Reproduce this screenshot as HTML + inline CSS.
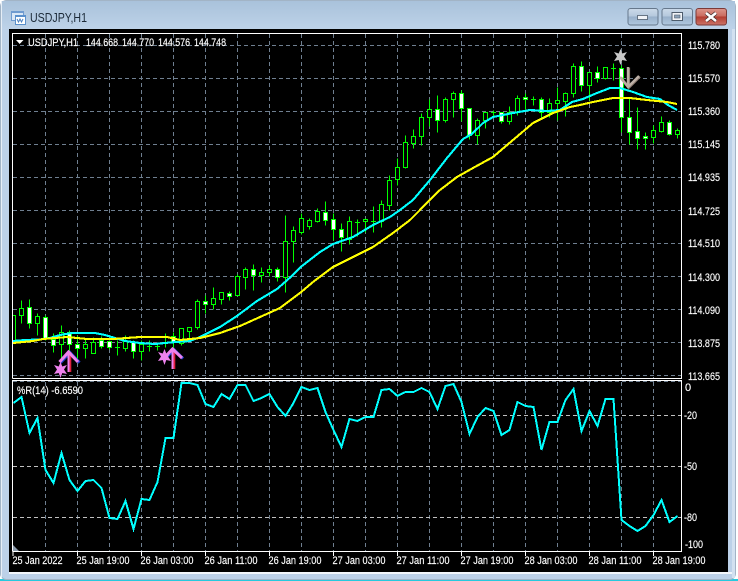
<!DOCTYPE html>
<html><head><meta charset="utf-8"><title>USDJPY,H1</title>
<style>
html,body{margin:0;padding:0;background:#fff}
body{width:738px;height:581px;overflow:hidden;position:relative}
svg{position:absolute;left:0;top:0;display:block}
text{font-family:"Liberation Sans",sans-serif;font-size:11px;fill:#fff;stroke:#fff;stroke-width:.15}
</style></head><body>
<svg width="738" height="581" viewBox="0 0 738 581" xmlns="http://www.w3.org/2000/svg">
<defs>
<linearGradient id="tb" x1="0" y1="0" x2="0" y2="1"><stop offset="0" stop-color="#a9c2db"/><stop offset="1" stop-color="#bdd2e8"/></linearGradient>
<linearGradient id="bt" x1="0" y1="0" x2="0" y2="1"><stop offset="0" stop-color="#ccdaea"/><stop offset=".48" stop-color="#b4c8dc"/><stop offset=".5" stop-color="#98b0ca"/><stop offset="1" stop-color="#b0c8e0"/></linearGradient>
<linearGradient id="cl" x1="0" y1="0" x2="0" y2="1"><stop offset="0" stop-color="#dc968c"/><stop offset=".48" stop-color="#c96a5e"/><stop offset=".5" stop-color="#b23c30"/><stop offset="1" stop-color="#cc7468"/></linearGradient>
</defs>
<rect width="738" height="581" fill="#fff"/>
<rect x="0" y="579" width="738" height="2" fill="#27c9de"/>
<rect x="0.5" y="0.5" width="735" height="579" rx="6" fill="#bcd1e8" stroke="#a2b4c6"/>
<rect x="1" y="1" width="734" height="28" fill="url(#tb)"/>
<rect x="1" y="1" width="1" height="577" fill="#e6eef6"/>
<rect x="732" y="29" width="3" height="549" fill="#d3e1f0"/>
<!-- icon -->
<rect x="11.5" y="11.5" width="12" height="9" fill="#dbe8f6" stroke="#6f9bd0"/>
<rect x="11" y="11" width="13" height="2" fill="#6f9bd0"/>
<rect x="15.5" y="15.5" width="10" height="9" fill="#fff" stroke="#5a90cc"/>
<rect x="15" y="15" width="11" height="2" fill="#5a90cc"/>
<path d="M17 19l1.5 3 1.5-3 1.5 3 1.5-3" fill="none" stroke="#4a80c0"/>
<text x="30" y="22" textLength="57" lengthAdjust="spacingAndGlyphs" style="font-size:13px;fill:#1c2a38;stroke:none">USDJPY,H1</text>
<!-- buttons -->
<rect x="628" y="8.5" width="30" height="16.5" rx="2.5" fill="url(#bt)" stroke="#66788c"/>
<rect x="637.5" y="15.5" width="10" height="4" fill="#f1f4f8" stroke="#4e5c6c" stroke-width=".8"/>
<rect x="662" y="8.5" width="30.5" height="16.5" rx="2.5" fill="url(#bt)" stroke="#66788c"/>
<rect x="672" y="12.5" width="10.500" height="8" fill="#f1f4f8" stroke="#4e5c6c"/>
<rect x="674.5" y="15" width="5.5" height="3" fill="#8da3bb" stroke="#4e5c6c" stroke-width=".6"/>
<rect x="696" y="8.5" width="30.5" height="16.5" rx="2.5" fill="url(#cl)" stroke="#7b3a38"/>
<path d="M706 13l10 8M716 13l-10 8" stroke="#3c2a2a" stroke-width="4"/>
<path d="M706 13l10 8M716 13l-10 8" stroke="#fff" stroke-width="2.6"/>
<!-- client -->
<rect x="9" y="29" width="719" height="543" fill="#000"/>
<rect x="9" y="572" width="723" height="2" fill="#f2f6fb"/>
<!-- grid -->
<g fill="none" stroke="#6f7f90" stroke-dasharray="4 3" shape-rendering="crispEdges">
<path d="M45.5 34V378M77.5 34V378M109.5 34V378M141.5 34V378M173.5 34V378M205.5 34V378M237.5 34V378M269.5 34V378M301.5 34V378M333.5 34V378M365.5 34V378M397.5 34V378M429.5 34V378M461.5 34V378M493.5 34V378M525.5 34V378M557.5 34V378M589.5 34V378M621.5 34V378M653.5 34V378"/>
<path d="M13 45.5H681M13 78.5H681M13 111.5H681M13 144.5H681M13 177.5H681M13 210.5H681M13 243.5H681M13 276.5H681M13 309.5H681M13 342.5H681M13 375.5H681"/>
<path d="M45.5 382V551M77.5 382V551M109.5 382V551M141.5 382V551M173.5 382V551M205.5 382V551M237.5 382V551M269.5 382V551M301.5 382V551M333.5 382V551M365.5 382V551M397.5 382V551M429.5 382V551M461.5 382V551M493.5 382V551M525.5 382V551M557.5 382V551M589.5 382V551M621.5 382V551M653.5 382V551"/>
<path d="M13 381.5H681"/>
<path stroke="#c0c0c0" d="M13 415.5H681M13 466.5H681M13 517.5H681"/>
</g>
<!-- candle wicks -->
<g transform="translate(0 .5)" shape-rendering="crispEdges">
<path fill="none" stroke="#0f0" d="M21.5 300V323M29.5 299V328M37.5 313V335M45.5 315V340M53.5 333V352M61.5 325V360M69.5 330V355M77.5 335V360M85.5 338V358M93.5 337V353M101.5 336V348M109.5 340V349M117.5 340V355M125.5 335V351M133.5 340V358M141.5 340V360M149.5 340V351M157.5 342V350M165.5 333V347M173.5 332V351M181.5 328V345M189.5 327V338M197.5 299V329M205.5 295V313M213.5 287V309M221.5 292V304M229.5 291V300M237.5 274V296M245.5 267V289M253.5 264V290M261.5 267V282M269.5 265V276M277.5 267V281M285.5 215V292M293.5 226V262M301.5 213V234M309.5 218V229M317.5 208V222M325.5 201V225M333.5 213V240M341.5 223V251M349.5 216V244M357.5 219V236M365.5 218V232M373.5 206V232M381.5 200V227M389.5 175V210M397.5 158V185M405.5 135V168M413.5 129V148M421.5 113V145M429.5 99V126M437.5 95V132M445.5 97V122M453.5 91V117M461.5 90V121M469.5 108V139M477.5 118V144M485.5 112V128M493.5 110V116M501.5 112V123M509.5 106V124M517.5 95V115M525.5 93V109M533.5 96V105M541.5 97V117M549.5 98V117M557.5 87V120M565.5 92V116M573.5 63V97M581.5 61V91M589.5 72V100M597.5 66V82M605.5 67V79M613.5 63V80M621.5 65V132M629.5 98V144M637.5 107V149M645.5 132V149M653.5 125V143M661.5 116V132M669.5 120V135M677.5 128V138"/>
<path fill="none" stroke="#0f0" d="M12 315H15.5V340H12M115 347H120M147 346H152M155 346H160M355 222H360M491 112H496M531 99H536M611 68H616M371 221H376"/>
<!-- black bodies -->
<g fill="#000" stroke="#0f0">
<rect x="19.5" y="308" width="4" height="7"/><rect x="35.5" y="316" width="4" height="7"/><rect x="59.5" y="332" width="4" height="12"/><rect x="83.5" y="344" width="4" height="4"/><rect x="91.5" y="342" width="4" height="11"/><rect x="123.5" y="341" width="4" height="7"/><rect x="139.5" y="344" width="4" height="7"/><rect x="179.5" y="328" width="4" height="15"/><rect x="187.5" y="327" width="4" height="4"/><rect x="195.5" y="301" width="4" height="26"/><rect x="211.5" y="298" width="4" height="6"/><rect x="219.5" y="292" width="4" height="7"/><rect x="235.5" y="276" width="4" height="19"/><rect x="243.5" y="269" width="4" height="8"/><rect x="259.5" y="272" width="4" height="3"/><rect x="267.5" y="269" width="4" height="3"/><rect x="283.5" y="241" width="4" height="36"/><rect x="291.5" y="230" width="4" height="11"/><rect x="299.5" y="218" width="4" height="14"/><rect x="307.5" y="220" width="4" height="6"/><rect x="315.5" y="211" width="4" height="10"/><rect x="347.5" y="221" width="4" height="18"/><rect x="363.5" y="219" width="4" height="2"/><rect x="379.5" y="204" width="4" height="17"/><rect x="387.5" y="180" width="4" height="25"/><rect x="395.5" y="167" width="4" height="12"/><rect x="403.5" y="142" width="4" height="25"/><rect x="411.5" y="136" width="4" height="7"/><rect x="419.5" y="117" width="4" height="19"/><rect x="427.5" y="109" width="4" height="8"/><rect x="443.5" y="99" width="4" height="21"/><rect x="451.5" y="93" width="4" height="6"/><rect x="475.5" y="120" width="4" height="15"/><rect x="483.5" y="112" width="4" height="8"/><rect x="507.5" y="112" width="4" height="9"/><rect x="515.5" y="98" width="4" height="14"/><rect x="547.5" y="103" width="4" height="9"/><rect x="555.5" y="100" width="4" height="3"/><rect x="563.5" y="93" width="4" height="8"/><rect x="571.5" y="66" width="4" height="27"/><rect x="587.5" y="72" width="4" height="13"/><rect x="603.5" y="67" width="4" height="11"/><rect x="651.5" y="130" width="4" height="7"/><rect x="659.5" y="122" width="4" height="9"/><rect x="675.5" y="130" width="4" height="4"/>
</g>
<!-- white bodies -->
<g fill="#fff" stroke="#0f0">
<rect x="27.5" y="307" width="4" height="16"/><rect x="43.5" y="317" width="4" height="21"/><rect x="51.5" y="339" width="4" height="6"/><rect x="67.5" y="332" width="4" height="12"/><rect x="75.5" y="344" width="4" height="4"/><rect x="99.5" y="340" width="4" height="6"/><rect x="107.5" y="341" width="4" height="6"/><rect x="131.5" y="342" width="4" height="9"/><rect x="171.5" y="336" width="4" height="6"/><rect x="203.5" y="301" width="4" height="3"/><rect x="227.5" y="293" width="4" height="3"/><rect x="251.5" y="269" width="4" height="6"/><rect x="275.5" y="269" width="4" height="8"/><rect x="323.5" y="212" width="4" height="8"/><rect x="331.5" y="219" width="4" height="10"/><rect x="339.5" y="229" width="4" height="8"/><rect x="435.5" y="109" width="4" height="11"/><rect x="459.5" y="93" width="4" height="15"/><rect x="467.5" y="108" width="4" height="27"/><rect x="499.5" y="112" width="4" height="9"/><rect x="523.5" y="97" width="4" height="2"/><rect x="539.5" y="99" width="4" height="13"/><rect x="579.5" y="66" width="4" height="19"/><rect x="595.5" y="72" width="4" height="6"/><rect x="619.5" y="68" width="4" height="49"/><rect x="627.5" y="117" width="4" height="15"/><rect x="635.5" y="131" width="4" height="7"/><rect x="643.5" y="136" width="4" height="2"/><rect x="667.5" y="122" width="4" height="12"/>
</g>
</g>
<!-- moving averages -->
<polyline fill="none" stroke="#0ff" stroke-width="2.1" shape-rendering="crispEdges" points="13,341 25,340 40,339.5 50,338 60,335 72,333 95,333 105,335 115,338 125,341 140,343 155,344 170,342.5 190,341 200,337 220,327 237,316 257,301 277,289 293,275 302,266 320,252 333,244 353,237 373,225 390,217 400,210 413,200 430,180 447,158 463,139 472,134 483,123 493,117 513,113 530,110 547,111 560,110 572,102 583,99 597,93 610,88 620,88 633,92 647,97 660,99 668,105 677,110"/>
<polyline fill="none" stroke="#ff0" stroke-width="2.1" shape-rendering="crispEdges" points="13,343 33,341 43,339 67,337 87,339 113,339 140,337 167,337 180,340 200,338 220,333 240,326 260,317 280,308 300,293 313,282 333,267 353,257 373,247 393,233 410,220 420,210 440,190 457,177 473,168 493,157 513,140 533,123 553,113 570,107 580,105 593,102 613,98 630,98 647,100 667,102 677,104"/>
<!-- arrows and stars -->
<g fill="none" stroke-width="3">
<path stroke="#2040d0" transform="translate(1 .6)" d="M59.5 362L69 352L78.5 362"/>
<path stroke="#e02040" stroke-width="2.6" transform="translate(1 0)" d="M69 372V352"/>
<path stroke="#ee82ee" d="M59.5 362L68.5 352L78 362"/>
<path stroke="#ee82ee" stroke-width="2" d="M68.5 372V352"/>
<path stroke="#2040d0" transform="translate(1 .6)" d="M164 358L173 349L182 358"/>
<path stroke="#e02040" stroke-width="2.6" transform="translate(1 0)" d="M173 369V349"/>
<path stroke="#ee82ee" d="M164 358L172.5 349L182 358"/>
<path stroke="#ee82ee" stroke-width="2" d="M172.5 369V349"/>
<path stroke="#8c7a70" stroke-width="2.6" transform="translate(.8 .6)" d="M628 67V87M620 77L628 87L639 76"/>
<path stroke="#bdb0a6" stroke-width="2.4" d="M628 67V87M620 77L628 87L639 76"/>
</g>
<polygon fill="#ee82ee" points="60.5,362 62.3,366.5 67,365 64,369.5 67,374 62.3,373 60.5,378 58.7,373 54,374 57,369.5 54,365 58.7,366.5"/>
<polygon fill="#ee82ee" points="164.5,349 166.3,353.5 171,352 168,356.5 171,361 166.3,360 164.5,365 162.7,360 158,361 161,356.5 158,352 162.7,353.5"/>
<polygon fill="#c8c8c8" points="620.5,49 622.3,53.5 627,52 624,56.5 627,61 622.3,60 620.5,65 618.7,60 614,61 617,56.5 614,52 618.7,53.5"/>
<!-- Williams %R -->
<polyline fill="none" stroke="#0ff" stroke-width="2" shape-rendering="crispEdges" points="13.5,403 21.5,397 29.5,433 37.5,418 45.5,470 53.5,483 61.5,453 69.5,480 77.5,491 85.5,481 93.5,480 101.5,488 109.5,518 117.5,519 125.5,501 133.5,529 141.5,499 149.5,500 157.5,482 165.5,438 173.5,438 181.5,383 189.5,383 197.5,385 205.5,404 213.5,407 221.5,394 229.5,399 237.5,385 245.5,385 253.5,401 261.5,398 269.5,394 277.5,407 285.5,416 293.5,403 301.5,387 309.5,390 317.5,388 325.5,412 333.5,430 341.5,447 349.5,419 357.5,421 365.5,417 373.5,417 381.5,390 389.5,389 397.5,396 405.5,392 413.5,392 421.5,388 429.5,392 437.5,409 445.5,386 453.5,384 461.5,402 469.5,434 477.5,417 485.5,408 493.5,411 501.5,435 509.5,430 517.5,402 525.5,406 533.5,407 541.5,450 549.5,422 557.5,422 565.5,400 573.5,389 581.5,431 589.5,411 597.5,426 605.5,399 613.5,399 621.5,520 629.5,526 637.5,531 645.5,526 653.5,515 661.5,500 669.5,522 677.5,516"/>
<!-- borders -->
<g fill="none" stroke="#fff" shape-rendering="crispEdges">
<path d="M12.5 378.5V33.5H681.5V378.5H12.5"/>
<path d="M12.5 551.5V380.5H681.5V551.5H12.5"/>
<path d="M77.5 551V556M141.5 551V556M205.5 551V556M269.5 551V556M333.5 551V556M397.5 551V556M461.5 551V556M525.5 551V556M589.5 551V556M653.5 551V556M13 551V556"/>
</g>
<polygon fill="#8b9aaa" points="13,545 13,551 19,551"/>
<!-- legends -->
<polygon fill="#fff" stroke="none" points="16,40 23.5,40 19.7,44"/>
<text x="28" y="46" textLength="50" lengthAdjust="spacingAndGlyphs">USDJPY,H1</text>
<text x="86" y="46" textLength="32" lengthAdjust="spacingAndGlyphs">144.668</text>
<text x="122" y="46" textLength="32" lengthAdjust="spacingAndGlyphs">144.770</text>
<text x="158" y="46" textLength="32" lengthAdjust="spacingAndGlyphs">144.576</text>
<text x="194" y="46" textLength="32" lengthAdjust="spacingAndGlyphs">144.748</text>
<text x="17" y="394" textLength="66" lengthAdjust="spacingAndGlyphs">%R(14) -6.6590</text>
<!-- right axis -->
<g>
<text x="688" y="49" textLength="32" lengthAdjust="spacingAndGlyphs">115.780</text>
<text x="688" y="82" textLength="32" lengthAdjust="spacingAndGlyphs">115.570</text>
<text x="688" y="115" textLength="32" lengthAdjust="spacingAndGlyphs">115.360</text>
<text x="688" y="148" textLength="32" lengthAdjust="spacingAndGlyphs">115.145</text>
<text x="688" y="181" textLength="32" lengthAdjust="spacingAndGlyphs">114.935</text>
<text x="688" y="215" textLength="32" lengthAdjust="spacingAndGlyphs">114.725</text>
<text x="688" y="247" textLength="32" lengthAdjust="spacingAndGlyphs">114.510</text>
<text x="688" y="281" textLength="32" lengthAdjust="spacingAndGlyphs">114.300</text>
<text x="688" y="314" textLength="32" lengthAdjust="spacingAndGlyphs">114.090</text>
<text x="688" y="347" textLength="32" lengthAdjust="spacingAndGlyphs">113.875</text>
<text x="688" y="380" textLength="32" lengthAdjust="spacingAndGlyphs">113.665</text>
<text x="685" y="391">0</text>
<text x="684" y="419" textLength="13" lengthAdjust="spacingAndGlyphs">-20</text>
<text x="684" y="470" textLength="13" lengthAdjust="spacingAndGlyphs">-50</text>
<text x="684" y="521" textLength="13" lengthAdjust="spacingAndGlyphs">-80</text>
<text x="685" y="548" textLength="18" lengthAdjust="spacingAndGlyphs">-100</text>
</g>
<!-- time axis -->
<g>
<text x="12.5" y="564" textLength="50" lengthAdjust="spacingAndGlyphs">25 Jan 2022</text>
<text x="76.5" y="564" textLength="53" lengthAdjust="spacingAndGlyphs">25 Jan 19:00</text>
<text x="140.5" y="564" textLength="53" lengthAdjust="spacingAndGlyphs">26 Jan 03:00</text>
<text x="204.5" y="564" textLength="53" lengthAdjust="spacingAndGlyphs">26 Jan 11:00</text>
<text x="268.5" y="564" textLength="53" lengthAdjust="spacingAndGlyphs">26 Jan 19:00</text>
<text x="332.5" y="564" textLength="53" lengthAdjust="spacingAndGlyphs">27 Jan 03:00</text>
<text x="396.5" y="564" textLength="53" lengthAdjust="spacingAndGlyphs">27 Jan 11:00</text>
<text x="460.5" y="564" textLength="53" lengthAdjust="spacingAndGlyphs">27 Jan 19:00</text>
<text x="524.5" y="564" textLength="53" lengthAdjust="spacingAndGlyphs">28 Jan 03:00</text>
<text x="588.5" y="564" textLength="53" lengthAdjust="spacingAndGlyphs">28 Jan 11:00</text>
<text x="652.5" y="564" textLength="53" lengthAdjust="spacingAndGlyphs">28 Jan 19:00</text>
</g>
</svg>
</body></html>
